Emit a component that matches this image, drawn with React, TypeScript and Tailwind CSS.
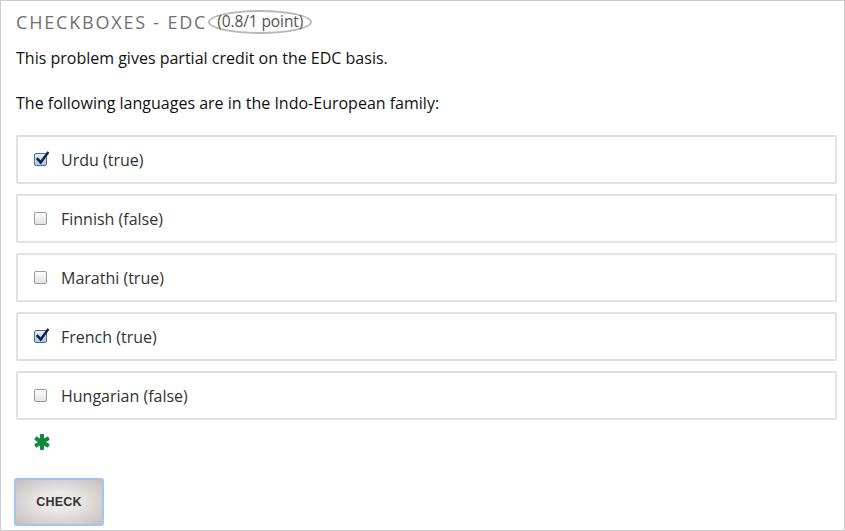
import React from "react";

const font = { fontFamily: '"Open Sans", "Noto Sans", sans-serif' };

function Box({ checked }: { checked: boolean }) {
  return (
    <span
      className={
        "relative inline-block w-[13px] h-[13px] rounded-[2px] border shrink-0 " +
        (checked
          ? "border-[#4b6f99] bg-[linear-gradient(#e4eefa,#a7c5ea)]"
          : "border-[#9a9a9a] bg-[linear-gradient(#ffffff,#e2e2e2)]")
      }
    >
      {checked && (
        <svg viewBox="0 0 13 13" className="absolute left-[0px] top-[-3px] w-[14px] h-[14px]">
          <path d="M2.5 7.5 L5.3 10.6 L11.8 1.8" fill="none" stroke="#15223a" strokeWidth="2.4" strokeLinecap="square" />
        </svg>
      )}
    </span>
  );
}

const options = [
  { label: "Urdu (true)", checked: true },
  { label: "Finnish (false)", checked: false },
  { label: "Marathi (true)", checked: false },
  { label: "French (true)", checked: true },
  { label: "Hungarian (false)", checked: false },
];

export default function App() {
  return (
    <div
      className="w-[845px] h-[531px] border border-[#cccccc] bg-white pl-[15px] pr-[7px] box-border overflow-hidden"
      style={font}
    >
      <div className="flex items-center h-[28px] mt-[7px]">
        <span className="text-[18px] tracking-[1.8px] text-[#707070] leading-none">CHECKBOXES - EDC</span>
        <span className="ml-[1px] px-[7px] h-[24px] flex items-center rounded-[50%] border-[2px] border-[#b8b8b8] text-[15.5px] tracking-[-0.1px] text-[#555] leading-none">
          (0.8/1 point)
        </span>
      </div>
      <p className="mt-[11px] text-[16px] leading-[22px] text-[#111]">This problem gives partial credit on the EDC basis.</p>
      <p className="mt-[23px] text-[16px] leading-[22px] text-[#111]">The following languages are in the Indo-European family:</p>
      <div className="mt-[21px] flex flex-col gap-[10px]">
        {options.map((o) => (
          <div
            key={o.label}
            className="h-[49px] border-[2px] border-[#e2e2e2] rounded-[2px] flex items-center pl-[16px]"
          >
            <Box checked={o.checked} />
            <span className="ml-[14px] text-[16px] text-[#333]">{o.label}</span>
          </div>
        ))}
      </div>
      <div className="mt-[14px] ml-[18px] h-[16px]">
        <svg viewBox="0 0 16 16" className="w-[16px] h-[16px]">
          <g fill="#128a3a">
            <rect x="6" y="0" width="4" height="16" rx="1" />
            <rect x="6" y="0" width="4" height="16" rx="1" transform="rotate(60 8 8)" />
            <rect x="6" y="0" width="4" height="16" rx="1" transform="rotate(-60 8 8)" />
          </g>
        </svg>
      </div>
      <button
        className="mt-[28px] -ml-[2px] w-[90px] h-[48px] rounded-[3px] border-[2px] border-[#9fc8f0] bg-[radial-gradient(ellipse_at_center,#ebe8e7_30%,#c6bebc_100%)] text-[12.5px] font-bold text-[#333] tracking-[0.2px]"
        style={{ fontFamily: '"Liberation Sans", Arial, sans-serif' }}
      >
        CHECK
      </button>
    </div>
  );
}
